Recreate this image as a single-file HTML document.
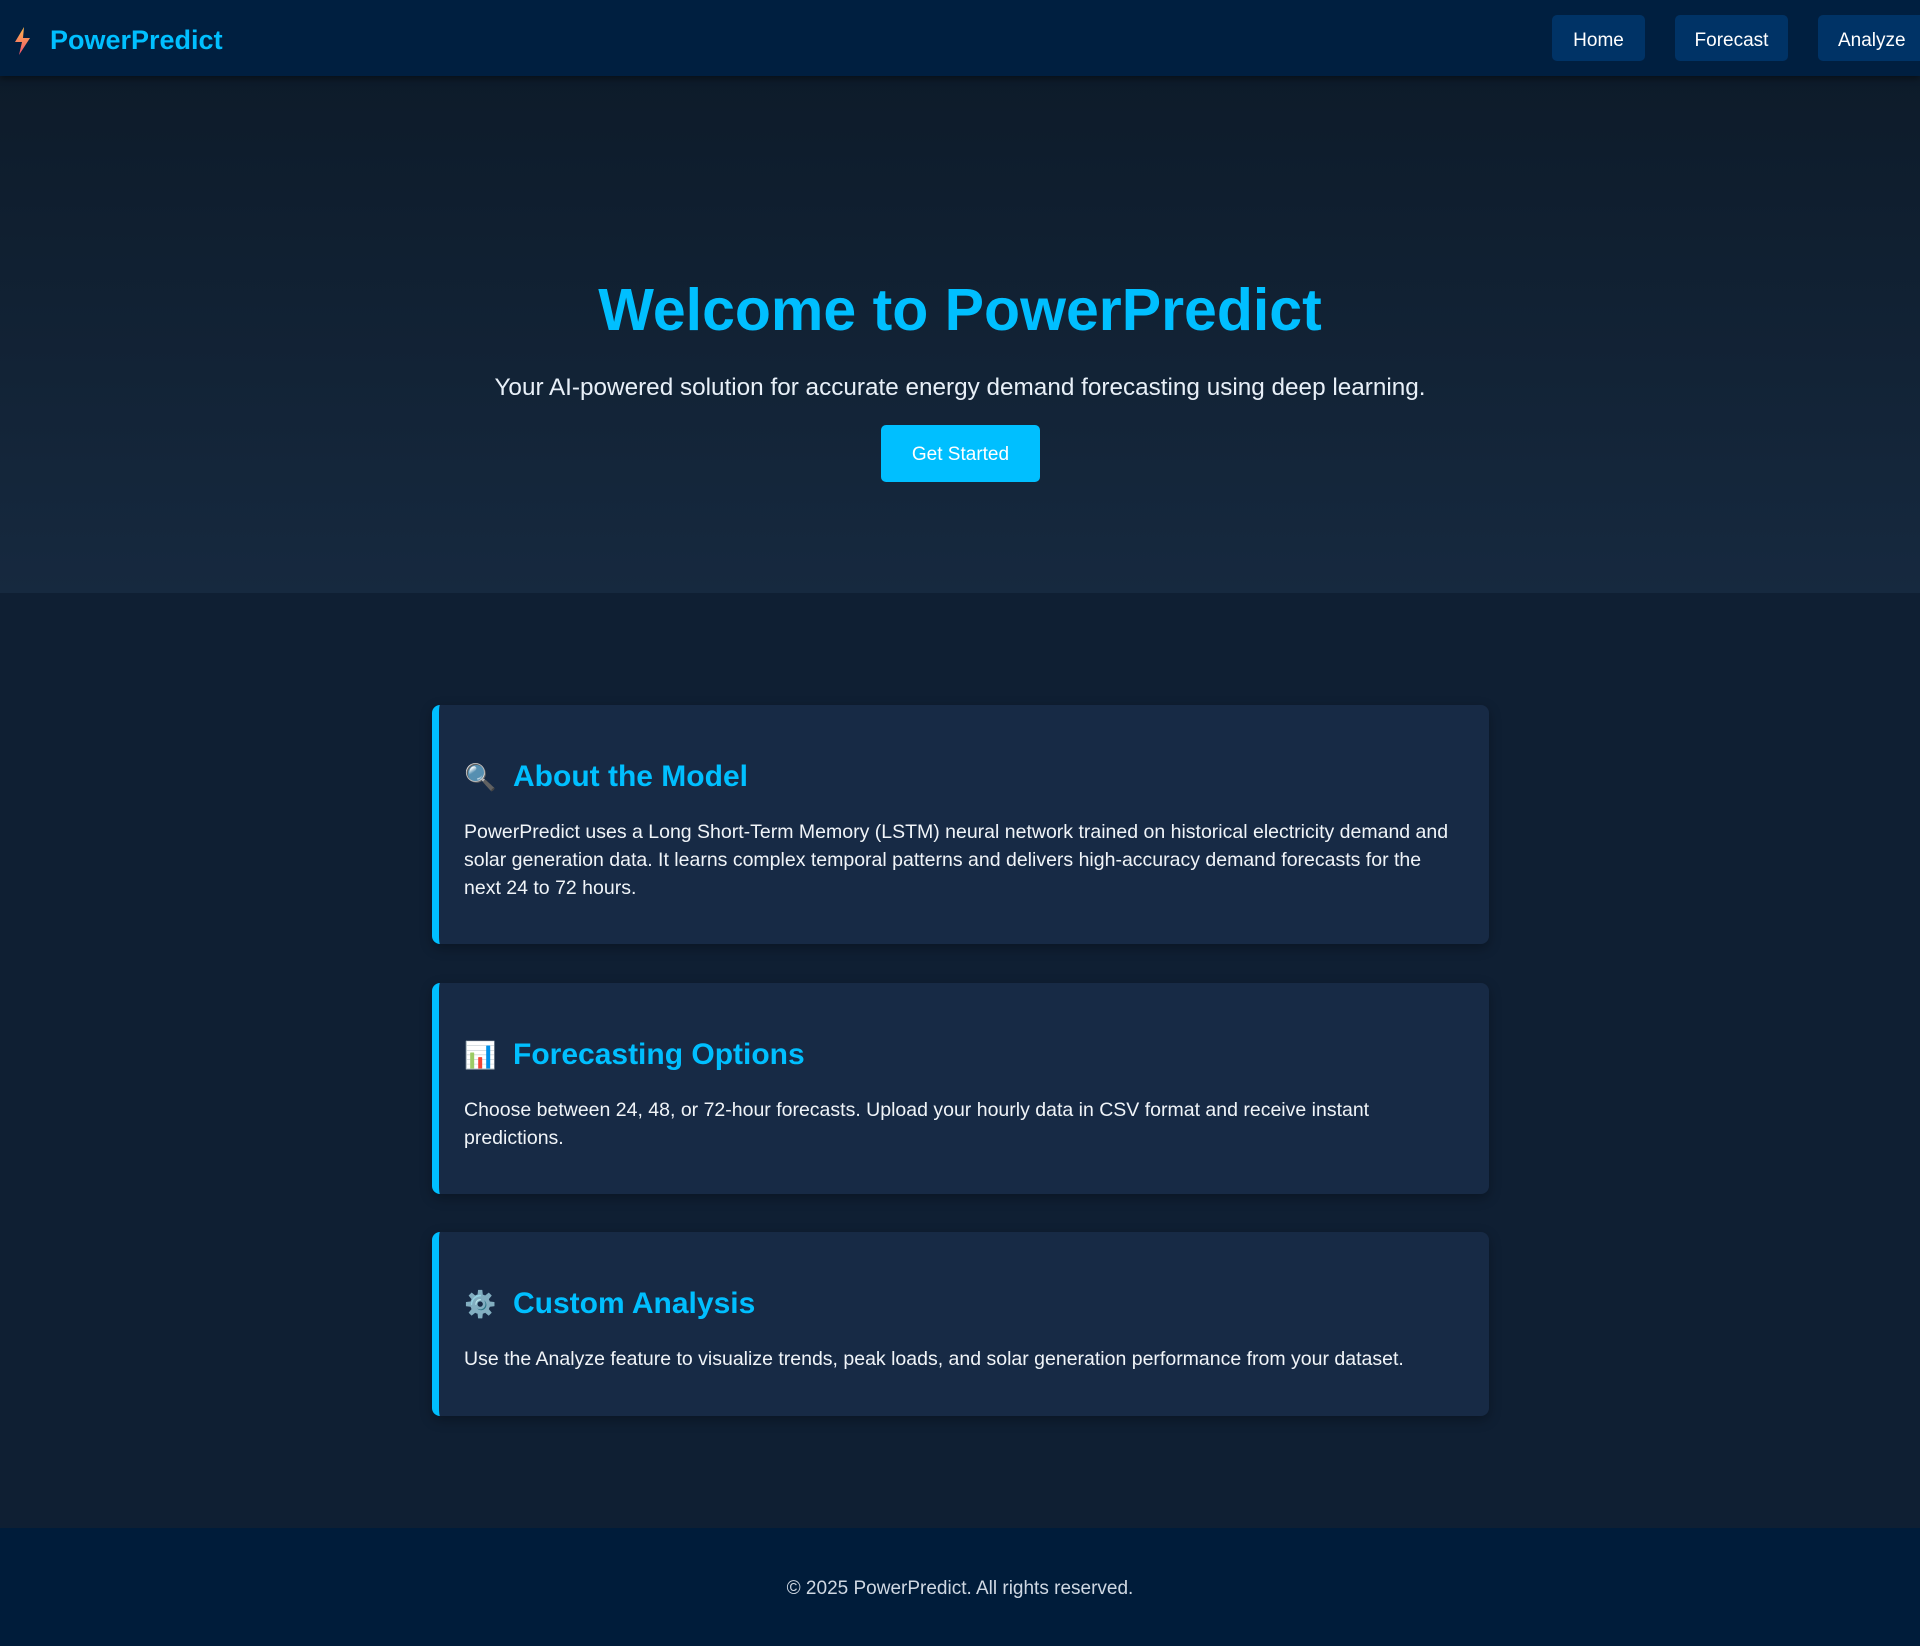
<!DOCTYPE html>
<html style="width:1920px;height:1646px;overflow:hidden"><head><meta charset="utf-8"><style>
*{margin:0;padding:0;box-sizing:border-box}
body{width:1920px;height:1646px;background:#0f1f33;font-family:"Liberation Sans",sans-serif;color:#e8f0f8;position:relative;overflow:hidden}
nav{position:absolute;top:0;left:0;width:1920px;height:76px;background:#001f40;box-shadow:0 3px 6px rgba(0,0,0,.4);z-index:2}
.logo{position:absolute;left:14px;top:25px;font-size:27px;font-weight:bold;color:#00bfff;display:flex;align-items:center}
.logo svg{margin-right:18px}
.nb{position:absolute;top:15px;height:46px;background:#003366;color:#fff;border-radius:5px;font-size:19px;line-height:52px;text-align:center}
.hero{position:absolute;top:76px;left:0;width:1920px;height:517px;background:linear-gradient(#0d1b2a,#16293f)}
h1{position:absolute;top:276px;width:1920px;text-align:center;font-size:59px;color:#00bfff;font-weight:bold}
.sub{position:absolute;top:374px;width:1920px;text-align:center;font-size:24.3px;color:#e8f0f8}
.btn{position:absolute;left:881px;top:425px;width:159px;height:57px;background:#00bfff;color:#fff;border-radius:5px;font-size:19px;line-height:60px;text-align:center}
.card{position:absolute;left:432px;width:1057px;background:#172a45;border-left:7px solid #00bfff;border-radius:8px;box-shadow:0 4px 12px rgba(0,0,0,.3);padding:0 34px 0 25px}
.card h2{font-size:30px;color:#00bfff;font-weight:bold;display:flex;align-items:center;height:40px}
.card h2 span{font-size:26px;margin-right:14px;width:35px}
.card p{font-size:19.5px;line-height:28px;margin-top:21px;color:#f0f4f8}
footer{position:absolute;top:1528px;left:0;width:1920px;height:118px;background:#001c3a;text-align:center;font-size:19px;line-height:122px;color:#cfd8e3}
</style></head><body>
<nav><div class="logo"><svg width="18" height="28" viewBox="0 0 18 28"><defs><linearGradient id="g" x1="0" y1="0" x2="0" y2="1"><stop offset="0" stop-color="#ffb84d"/><stop offset="1" stop-color="#f0506e"/></linearGradient></defs><path d="M10 0 L1 15 L8 15 L5 28 L16 11 L9 11 Z" fill="url(#g)"/></svg>PowerPredict</div>
<div class="nb" style="left:1552px;width:93px">Home</div>
<div class="nb" style="left:1675px;width:113px">Forecast</div>
<div class="nb" style="left:1818px;width:102px;text-align:left;padding-left:20px;border-radius:5px 0 0 5px">Analyze</div>
</nav>
<div class="hero"></div>
<h1>Welcome to PowerPredict</h1>
<div class="sub">Your AI-powered solution for accurate energy demand forecasting using deep learning.</div>
<div class="btn">Get Started</div>
<div class="card" style="top:705px;height:239px;padding-top:52px"><h2><span>🔍</span>About the Model</h2><p>PowerPredict uses a Long Short-Term Memory (LSTM) neural network trained on historical electricity demand and solar generation data. It learns complex temporal patterns and delivers high-accuracy demand forecasts for the next 24 to 72 hours.</p></div>
<div class="card" style="top:983px;height:211px;padding-top:52px"><h2><span>📊</span>Forecasting Options</h2><p>Choose between 24, 48, or 72-hour forecasts. Upload your hourly data in CSV format and receive instant<br>predictions.</p></div>
<div class="card" style="top:1232px;height:184px;padding-top:52px"><h2><span>⚙️</span>Custom Analysis</h2><p>Use the Analyze feature to visualize trends, peak loads, and solar generation performance from your dataset.</p></div>
<footer>© 2025 PowerPredict. All rights reserved.</footer>
</body></html>
